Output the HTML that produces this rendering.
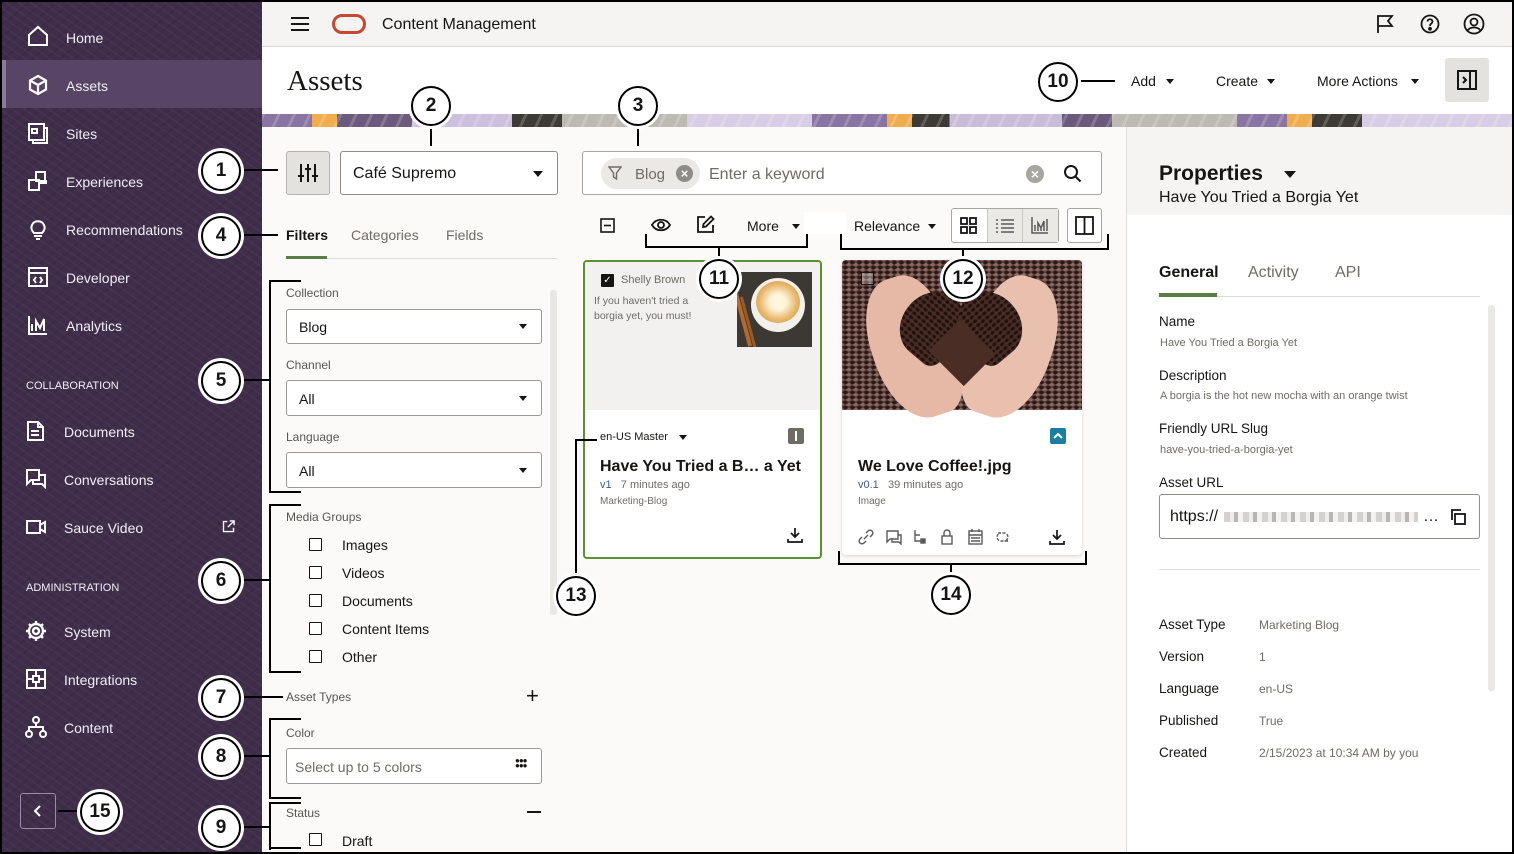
<!DOCTYPE html>
<html><head><meta charset="utf-8"><style>
*{box-sizing:border-box;margin:0;padding:0}
body{width:1514px;height:854px;position:relative;overflow:hidden;font-family:"Liberation Sans",sans-serif;background:#fbfaf8;color:#161513}
.a{position:absolute}
.t{position:absolute;white-space:nowrap;line-height:1}
.side{left:0;top:0;width:262px;height:854px;background:#3f2d4a;background-image:repeating-linear-gradient(35deg,rgba(255,255,255,.03) 0 2px,transparent 2px 7px),repeating-linear-gradient(-40deg,rgba(0,0,0,.06) 0 2px,transparent 2px 9px)}
.si{color:#f2eef4;font-size:14px}
.sec{color:#f2eef4;font-size:11px}
.ic{position:absolute}
.c{position:absolute;width:40px;height:40px;border:2px solid #000;border-radius:50%;background:#fff;box-shadow:0 0 0 3px #fff;font:bold 19px "Liberation Sans",sans-serif;display:flex;align-items:center;justify-content:center}
.l{position:absolute;background:#000}
.sel{position:absolute;background:#fff;border:1px solid #9a9894;border-radius:3px}
.car{position:absolute;width:0;height:0;border-left:4px solid transparent;border-right:4px solid transparent;border-top:5px solid #161513}
.cb{position:absolute;width:13px;height:13px;border:1.5px solid #161513;border-radius:1px;background:#fff}
.lab{font-size:12px;color:#58564f}
.val{font-size:11px;color:#6f6c66}
</style></head><body>
<div class="a" style="inset:0;border:2px solid #000;z-index:50;pointer-events:none"></div>

<!-- sidebar -->
<div class="a side"></div>
<div class="a" style="left:2px;top:60px;width:260px;height:48px;background:#584566"></div>
<div class="a" style="left:2px;top:60px;width:4px;height:48px;background:#8c7a9b"></div>
<svg class="ic" style="left:26px;top:24px" width="24" height="24" viewBox="0 0 24 24" fill="none" stroke="#fff" stroke-width="2"><path d="M3 11 L12 3 L21 11 V21 H3 Z"/></svg>
<div class="t si" style="left:66px;top:31px">Home</div>
<svg class="ic" style="left:26px;top:73px" width="24" height="24" viewBox="0 0 24 24" fill="none" stroke="#fff" stroke-width="2.2"><path d="M12 3 L20 7.5 V16.5 L12 21 L4 16.5 V7.5 Z M4 7.5 L12 12 L20 7.5 M12 12 V21"/></svg>
<div class="t si" style="left:66px;top:79px">Assets</div>
<svg class="ic" style="left:26px;top:121px" width="24" height="24" viewBox="0 0 24 24" fill="none" stroke="#fff" stroke-width="2"><rect x="3" y="3" width="15" height="16"/><path d="M18 7 H21 V22 H7 V19"/><rect x="6" y="8" width="5" height="4"/></svg>
<div class="t si" style="left:66px;top:127px">Sites</div>
<svg class="ic" style="left:26px;top:169px" width="24" height="24" viewBox="0 0 24 24" fill="none" stroke="#fff" stroke-width="2"><rect x="10" y="3" width="9" height="9"/><rect x="3" y="11" width="10" height="10"/><path d="M13 14 H20 V11"/></svg>
<div class="t si" style="left:66px;top:175px">Experiences</div>
<svg class="ic" style="left:26px;top:217px" width="24" height="24" viewBox="0 0 24 24" fill="none" stroke="#fff" stroke-width="2"><path d="M8 16 C5 13 5 10 6 8 C8 3 16 3 18 8 C19 10 19 13 16 16 Z M8 19 H16 M10 22 H14"/></svg>
<div class="t si" style="left:66px;top:223px">Recommendations</div>
<svg class="ic" style="left:26px;top:265px" width="24" height="24" viewBox="0 0 24 24" fill="none" stroke="#fff" stroke-width="2"><rect x="3" y="3" width="18" height="18"/><path d="M3 8 H21 M10 12 L8 15 L10 18 M14 12 L16 15 L14 18"/></svg>
<div class="t si" style="left:66px;top:271px">Developer</div>
<svg class="ic" style="left:26px;top:313px" width="24" height="24" viewBox="0 0 24 24" fill="none" stroke="#fff" stroke-width="2"><path d="M3 3 V21 H21 M6 18 V11 M10 18 V8 L14 15 L18 6 V18"/></svg>
<div class="t si" style="left:66px;top:319px">Analytics</div>
<div class="t sec" style="left:26px;top:381px">COLLABORATION</div>
<svg class="ic" style="left:24px;top:419px" width="24" height="24" viewBox="0 0 24 24" fill="none" stroke="#fff" stroke-width="2"><path d="M4 3 H14 L19 8 V21 H4 Z M14 3 V8 H19 M7 12 H15 M7 16 H15"/></svg>
<div class="t si" style="left:64px;top:425px">Documents</div>
<svg class="ic" style="left:24px;top:467px" width="24" height="24" viewBox="0 0 24 24" fill="none" stroke="#fff" stroke-width="2"><path d="M3 3 H15 V13 H7 L3 17 Z M15 8 H21 V20 L18 17 H9 V13"/></svg>
<div class="t si" style="left:64px;top:473px">Conversations</div>
<svg class="ic" style="left:24px;top:515px" width="24" height="24" viewBox="0 0 24 24" fill="none" stroke="#fff" stroke-width="2"><rect x="3" y="6" width="13" height="12"/><path d="M16 10 L21 7 V17 L16 14"/></svg>
<div class="t si" style="left:64px;top:521px">Sauce Video</div>
<svg class="ic" style="left:221px;top:519px" width="15" height="15" viewBox="0 0 24 24" fill="none" stroke="#fff" stroke-width="2.2"><path d="M10 4 H4 V20 H20 V14 M14 3 H21 V10 M21 3 L11 13"/></svg>
<div class="t sec" style="left:26px;top:583px">ADMINISTRATION</div>
<svg class="ic" style="left:24px;top:619px" width="24" height="24" viewBox="0 0 24 24" fill="none" stroke="#fff" stroke-width="2.4"><circle cx="12" cy="12" r="3"/><path d="M12 2 V5 M12 19 V22 M2 12 H5 M19 12 H22 M5 5 L7 7 M17 17 L19 19 M5 19 L7 17 M17 7 L19 5"/><circle cx="12" cy="12" r="7"/></svg>
<div class="t si" style="left:64px;top:625px">System</div>
<svg class="ic" style="left:24px;top:667px" width="24" height="24" viewBox="0 0 24 24" fill="none" stroke="#fff" stroke-width="2"><rect x="3" y="3" width="18" height="18"/><path d="M12 3 V9 M3 12 H9 M12 15 V21 M15 12 H21 M9 9 H15 V15 H9 Z"/></svg>
<div class="t si" style="left:64px;top:673px">Integrations</div>
<svg class="ic" style="left:24px;top:715px" width="24" height="24" viewBox="0 0 24 24" fill="none" stroke="#fff" stroke-width="2"><circle cx="12" cy="5" r="3"/><circle cx="5" cy="19" r="3"/><circle cx="19" cy="19" r="3"/><path d="M12 8 V12 M5 16 V12 H19 V16"/></svg>
<div class="t si" style="left:64px;top:721px">Content</div>
<div class="a" style="left:20px;top:793px;width:36px;height:36px;border:1px solid #9c8aab;border-radius:3px"></div>
<svg class="ic" style="left:30px;top:803px" width="16" height="16" viewBox="0 0 16 16" fill="none" stroke="#fff" stroke-width="2"><path d="M10 3 L5 8 L10 13"/></svg>

<!-- top bar -->
<div class="a" style="left:262px;top:0;width:1252px;height:47px;background:#f5f4f2;border-bottom:1px solid #dcdad6"></div>
<svg class="ic" style="left:290px;top:15px" width="20" height="18" viewBox="0 0 20 18" stroke="#161513" stroke-width="2"><path d="M1 3 H19 M1 9 H19 M1 15 H19"/></svg>
<div class="a" style="left:332px;top:14px;width:34px;height:20px;border:3.5px solid #c74634;border-radius:10px"></div>
<div class="t" style="left:382px;top:17px;font-size:16px">Content Management</div>
<svg class="ic" style="left:1375px;top:14px" width="20" height="20" viewBox="0 0 20 20" fill="none" stroke="#161513" stroke-width="1.8"><path d="M3 19 V2 H17 L13 7 L17 12 H3"/></svg>
<svg class="ic" style="left:1420px;top:14px" width="20" height="20" viewBox="0 0 20 20" fill="none" stroke="#161513" stroke-width="1.8"><circle cx="10" cy="10" r="8.5"/><path d="M7.5 7.5 C7.5 4.5 12.5 4.5 12.5 7.5 C12.5 9.5 10 9.5 10 12"/><circle cx="10" cy="14.8" r="1" fill="#161513"/></svg>
<svg class="ic" style="left:1463px;top:13px" width="22" height="22" viewBox="0 0 22 22" fill="none" stroke="#161513" stroke-width="1.8"><circle cx="11" cy="11" r="9.5"/><circle cx="11" cy="9" r="3.5"/><path d="M4.5 17.5 C7 13.5 15 13.5 17.5 17.5"/></svg>

<!-- header -->
<div class="a" style="left:262px;top:47px;width:1252px;height:67px;background:#fff"></div>
<div class="t" style="left:287px;top:67px;font-family:'Liberation Serif',serif;font-size:29px">Assets</div>
<div class="t" style="left:1131px;top:74px;font-size:14px">Add</div><div class="car" style="left:1166px;top:79px"></div>
<div class="t" style="left:1216px;top:74px;font-size:14px">Create</div><div class="car" style="left:1267px;top:79px"></div>
<div class="t" style="left:1317px;top:74px;font-size:14px">More Actions</div><div class="car" style="left:1411px;top:79px"></div>
<div class="a" style="left:1445px;top:58px;width:44px;height:44px;background:#e4e2df;border-radius:3px"></div>
<svg class="ic" style="left:1456px;top:69px" width="22" height="22" viewBox="0 0 22 22" fill="none" stroke="#161513" stroke-width="2"><rect x="2" y="2" width="18" height="18"/><path d="M14 2 V20 M7 8 L10 11 L7 14"/></svg>

<!-- banner -->
<div class="a" style="left:262px;top:114px;width:1250px;height:13px;background:linear-gradient(90deg,#8a74a3 0 4%,#f0ad4e 4% 6%,#6b5a7e 6% 12%,#cdbfdf 12% 20%,#3e3a36 20% 24%,#bdbab4 24% 34%,#d8cde6 34% 44%,#8a74a3 44% 50%,#f0ad4e 50% 52%,#3e3a36 52% 55%,#c9bcd9 55% 64%,#6b5a7e 64% 68%,#bdbab4 68% 78%,#8a74a3 78% 82%,#f0ad4e 82% 84%,#3e3a36 84% 88%,#d8cde6 88% 100%)"></div>
<div class="a" style="left:262px;top:114px;width:1250px;height:13px;background:repeating-linear-gradient(115deg,rgba(255,255,255,.18) 0 3px,transparent 3px 14px)"></div>

<!-- filter panel -->
<div class="a" style="left:286px;top:151px;width:44px;height:44px;background:#e4e2df;border:1px solid #b5b2ad;border-radius:3px"></div>
<svg class="ic" style="left:297px;top:162px" width="22" height="22" viewBox="0 0 22 22" fill="none" stroke="#161513" stroke-width="2"><path d="M4 2 V20 M11 2 V20 M18 2 V20 M1 14 H7 M8 7 H14 M15 14 H21"/></svg>
<div class="sel" style="left:340px;top:151px;width:218px;height:44px;border-color:#8f8d88"></div>
<div class="t" style="left:353px;top:166px;font-size:16px">Café Supremo</div><div class="car" style="left:533px;top:171px;border-left-width:5px;border-right-width:5px;border-top-width:6px"></div>
<div class="t" style="left:286px;top:228px;font-size:14px;font-weight:bold">Filters</div>
<div class="t" style="left:351px;top:228px;font-size:14px;color:#6f6c66">Categories</div>
<div class="t" style="left:446px;top:228px;font-size:14px;color:#6f6c66">Fields</div>
<div class="a" style="left:286px;top:258px;width:271px;height:1px;background:#dcdad6"></div>
<div class="a" style="left:286px;top:256px;width:41px;height:3px;background:#5a7d47"></div>
<div class="a" style="left:550px;top:290px;width:7px;height:325px;background:#e8e7e4;border-radius:3px"></div>

<div class="t lab" style="left:286px;top:287px">Collection</div>
<div class="sel" style="left:286px;top:309px;width:256px;height:35px"></div><div class="t" style="left:299px;top:320px;font-size:14px">Blog</div><div class="car" style="left:519px;top:324px"></div>
<div class="t lab" style="left:286px;top:359px">Channel</div>
<div class="sel" style="left:286px;top:380px;width:256px;height:36px"></div><div class="t" style="left:299px;top:392px;font-size:14px">All</div><div class="car" style="left:519px;top:396px"></div>
<div class="t lab" style="left:286px;top:431px">Language</div>
<div class="sel" style="left:286px;top:452px;width:256px;height:36px"></div><div class="t" style="left:299px;top:464px;font-size:14px">All</div><div class="car" style="left:519px;top:468px"></div>
<div class="t lab" style="left:286px;top:511px">Media Groups</div>
<div class="cb" style="left:309px;top:538px"></div><div class="t" style="left:342px;top:538px;font-size:14px">Images</div>
<div class="cb" style="left:309px;top:566px"></div><div class="t" style="left:342px;top:566px;font-size:14px">Videos</div>
<div class="cb" style="left:309px;top:594px"></div><div class="t" style="left:342px;top:594px;font-size:14px">Documents</div>
<div class="cb" style="left:309px;top:622px"></div><div class="t" style="left:342px;top:622px;font-size:14px">Content Items</div>
<div class="cb" style="left:309px;top:650px"></div><div class="t" style="left:342px;top:650px;font-size:14px">Other</div>
<div class="t lab" style="left:286px;top:691px">Asset Types</div>
<div class="t" style="left:526px;top:685px;font-size:22px">+</div>
<div class="t lab" style="left:286px;top:727px">Color</div>
<div class="sel" style="left:286px;top:748px;width:256px;height:36px"></div><div class="t" style="left:295px;top:760px;font-size:14px;color:#6f6c66">Select up to 5 colors</div>
<div class="t" style="left:515px;top:758px;font-size:8px;letter-spacing:-1px;line-height:5px">●●●<br>●●●</div>
<div class="t lab" style="left:286px;top:807px">Status</div>
<div class="a" style="left:527px;top:811px;width:14px;height:2px;background:#161513"></div>
<div class="cb" style="left:309px;top:833px"></div><div class="t" style="left:342px;top:834px;font-size:14px">Draft</div>

<!-- search -->
<div class="sel" style="left:582px;top:151px;width:520px;height:44px;border-color:#a8a6a1"></div>
<div class="a" style="left:601px;top:158px;width:99px;height:31px;background:#ebe9e6;border-radius:16px"></div>
<svg class="ic" style="left:608px;top:166px" width="14" height="14" viewBox="0 0 14 14" fill="none" stroke="#6f6c66" stroke-width="1.4"><path d="M1 1 H13 L8.5 7 V13 L5.5 11 V7 Z"/></svg>
<div class="t" style="left:635px;top:167px;font-size:15px;color:#6f6c66">Blog</div>
<div class="a" style="left:676px;top:165px;width:17px;height:17px;border-radius:50%;background:#8f8d88;color:#fff;font-size:13px;text-align:center;line-height:17px;font-weight:bold">×</div>
<div class="t" style="left:709px;top:167px;font-size:16px;color:#6f6c66">Enter a keyword</div>
<div class="a" style="left:1026px;top:165px;width:18px;height:18px;border-radius:50%;background:#a8a6a1;color:#fff;font-size:14px;text-align:center;line-height:18px;font-weight:bold">×</div>
<svg class="ic" style="left:1063px;top:164px" width="19" height="19" viewBox="0 0 19 19" fill="none" stroke="#161513" stroke-width="2"><circle cx="8" cy="8" r="6"/><path d="M12.5 12.5 L17.5 17.5"/></svg>

<!-- toolbar -->
<svg class="ic" style="left:600px;top:218px" width="15" height="15" viewBox="0 0 15 15" fill="none" stroke="#161513" stroke-width="1.6"><rect x="1" y="1" width="13" height="13"/><path d="M4 7.5 H11"/></svg>
<svg class="ic" style="left:651px;top:216px" width="20" height="18" viewBox="0 0 20 18" fill="none" stroke="#161513" stroke-width="1.8"><path d="M1 9 C5 2 15 2 19 9 C15 16 5 16 1 9 Z"/><circle cx="10" cy="9" r="3"/></svg>
<svg class="ic" style="left:696px;top:215px" width="19" height="19" viewBox="0 0 19 19" fill="none" stroke="#161513" stroke-width="1.8"><path d="M9 2 H2 V17 H17 V10 M15 1.5 L17.5 4 L10 11.5 L7 12 L7.5 9 Z"/></svg>
<div class="t" style="left:747px;top:219px;font-size:14px">More</div><div class="car" style="left:792px;top:224px"></div>
<div class="a" style="left:804px;top:212px;width:42px;height:22px;background:#fff"></div>
<div class="t" style="left:854px;top:219px;font-size:14px">Relevance</div><div class="car" style="left:928px;top:224px"></div>
<div class="a" style="left:951px;top:208px;width:108px;height:35px;border:1px solid #a8a6a1;border-radius:3px;background:#fff"></div>
<div class="a" style="left:987px;top:209px;width:71px;height:33px;background:#ebe9e6;border-left:1px solid #c8c6c1"></div>
<div class="a" style="left:1022px;top:209px;width:1px;height:33px;background:#c8c6c1"></div>
<svg class="ic" style="left:960px;top:217px" width="17" height="17" viewBox="0 0 17 17" fill="none" stroke="#161513" stroke-width="1.8"><rect x="1" y="1" width="6" height="6"/><rect x="10" y="1" width="6" height="6"/><rect x="1" y="10" width="6" height="6"/><rect x="10" y="10" width="6" height="6"/></svg>
<svg class="ic" style="left:996px;top:218px" width="18" height="15" viewBox="0 0 18 15" stroke="#5a5a5a" stroke-width="1.6"><path d="M0 2 H2 M5 2 H18 M0 6 H2 M5 6 H18 M0 10 H2 M5 10 H18 M0 14 H2 M5 14 H18"/></svg>
<svg class="ic" style="left:1031px;top:216px" width="18" height="18" viewBox="0 0 18 18" fill="none" stroke="#5a5a5a" stroke-width="1.5"><path d="M1 1 V17 H17 M4 15 V9 M7 15 V7 L10 12 L13 5 M10 15 V12 M13 15 V5 M16 15 V3"/></svg>
<div class="a" style="left:1067px;top:208px;width:35px;height:35px;border:1px solid #a8a6a1;border-radius:3px;background:#fff"></div>
<svg class="ic" style="left:1075px;top:216px" width="19" height="19" viewBox="0 0 19 19" fill="none" stroke="#161513" stroke-width="1.8"><rect x="1" y="1" width="17" height="17"/><path d="M9.5 1 V18"/></svg>

<!-- card 1 -->
<div class="a" style="left:583px;top:260px;width:239px;height:299px;border:2px solid #5b9034;border-radius:4px;background:#fff;overflow:hidden">
 <div class="a" style="left:0;top:0;width:235px;height:148px;background:#f2f1ef"></div>
</div>
<div class="a" style="left:601px;top:274px;width:13px;height:13px;background:#161513;border-radius:1px;color:#fff;font-size:10px;line-height:13px;text-align:center">✓</div>
<div class="t" style="left:621px;top:275px;font-size:11px;color:#6f6c66">Shelly Brown</div>
<div class="t" style="left:594px;top:294px;font-size:10.5px;color:#6f6c66;line-height:15px">If you haven't tried a<br>borgia yet, you must!</div>
<div class="a" style="left:737px;top:272px;width:75px;height:75px;background:#3c3834;overflow:hidden">
 <div class="a" style="left:14px;top:6px;width:54px;height:54px;border-radius:50%;background:#f2f0ea"></div>
 <div class="a" style="left:19px;top:9px;width:44px;height:42px;border-radius:50%;background:radial-gradient(#fff6dc 0 25%,#e8b76a 60%,#c98a3c)"></div>
 <div class="a" style="left:4px;top:20px;width:4px;height:55px;background:#b56a2c;transform:rotate(-15deg)"></div>
 <div class="a" style="left:10px;top:24px;width:3px;height:55px;background:#9a5a24;transform:rotate(-15deg)"></div>
</div>
<div class="t" style="left:600px;top:432px;font-size:11px">en-US Master</div><div class="car" style="left:679px;top:435px"></div>
<div class="a" style="left:788px;top:428px;width:16px;height:16px;background:#6f6c66;border-radius:2px"></div><div class="a" style="left:795px;top:431px;width:2px;height:10px;background:#fff"></div>
<div class="t" style="left:600px;top:459px;font-size:16px;font-weight:bold">Have You Tried a B… a Yet</div>
<div class="t" style="left:600px;top:480px;font-size:11px;color:#6f6c66"><span style="color:#3a5c8f">v1</span>&nbsp;&nbsp; 7 minutes ago</div>
<div class="t" style="left:600px;top:497px;font-size:10px;color:#6f6c66">Marketing-Blog</div>
<svg class="ic" style="left:787px;top:527px" width="16" height="16" viewBox="0 0 16 16" fill="none" stroke="#161513" stroke-width="1.7"><path d="M8 1 V10 M4 6 L8 10 L12 6 M1 12 V15 H15 V12"/></svg>

<!-- card 2 -->
<div class="a" style="left:842px;top:260px;width:240px;height:295px;background:#fff;border-radius:4px;box-shadow:0 1px 3px rgba(0,0,0,.15);overflow:hidden">
 <div class="a" style="left:0;top:0;width:240px;height:150px;background:radial-gradient(ellipse 3px 2px at 50% 50%,#2a1812 0 60%,transparent 100%) 0 0/7px 5px,radial-gradient(ellipse 3px 2px at 50% 50%,#8a6a66 0 60%,transparent 100%) 3px 2px/7px 5px,#5a3e3a"></div>
 <div class="a" style="left:30px;top:15px;width:80px;height:145px;border-radius:45% 40% 30% 50%;background:#e6b8a6;transform:rotate(-18deg)"></div>
 <div class="a" style="left:130px;top:15px;width:80px;height:145px;border-radius:40% 45% 50% 30%;background:#e9bfae;transform:rotate(18deg)"></div>
 <div class="a" style="left:60px;top:30px;width:60px;height:70px;border-radius:50% 50% 20% 50%;background:radial-gradient(ellipse 3px 2px,#1f120d 0 60%,transparent 100%) 0 0/6px 5px,#4a2d25;transform:rotate(40deg)"></div>
 <div class="a" style="left:118px;top:30px;width:60px;height:70px;border-radius:50% 50% 50% 20%;background:radial-gradient(ellipse 3px 2px,#1f120d 0 60%,transparent 100%) 0 0/6px 5px,#4a2d25;transform:rotate(-40deg)"></div>
 <div class="a" style="left:95px;top:70px;width:50px;height:45px;background:#4a2d25;transform:rotate(45deg)"></div>
</div>
<div class="a" style="left:861px;top:272px;width:13px;height:13px;border:1.5px solid #161513;background:rgba(255,255,255,.3)"></div>
<div class="a" style="left:1050px;top:428px;width:16px;height:16px;background:#1a7ea3;border-radius:2px"></div>
<svg class="ic" style="left:1053px;top:431px" width="10" height="10" viewBox="0 0 10 10" fill="none" stroke="#fff" stroke-width="2"><path d="M1 7 L5 3 L9 7"/></svg>
<div class="t" style="left:858px;top:459px;font-size:16px;font-weight:bold">We Love Coffee!.jpg</div>
<div class="t" style="left:858px;top:480px;font-size:11px;color:#6f6c66"><span style="color:#3a5c8f">v0.1</span>&nbsp;&nbsp; 39 minutes ago</div>
<div class="t" style="left:858px;top:497px;font-size:10px;color:#6f6c66">Image</div>
<svg class="ic" style="left:858px;top:529px" width="215" height="16" viewBox="0 0 215 16" fill="none" stroke="#5a5a5a" stroke-width="1.4">
<path d="M6 10 L10 6 M4 8 L2 10 A2.5 2.5 0 0 0 6 14 L8 12 M8 4 L10 2 A2.5 2.5 0 0 1 14 6 L12 8"/>
<path d="M29 2 H40 V10 H32 L29 13 Z M40 6 H43 V15 L41 13 H34 V10"/>
<path d="M57 1 V6 H62 M57 6 V12 H63"/><rect x="63" y="10" width="4" height="4" fill="#5a5a5a"/>
<rect x="84" y="7" width="10" height="8"/><path d="M86 7 V4 A3 3 0 0 1 92 4 V7"/>
<rect x="111" y="2" width="13" height="13"/><path d="M111 6 H124 M114 0 V3 M121 0 V3 M113 9 H122 M113 12 H122"/>
<path d="M140 4 H146 A4 4 0 0 1 146 12 M150 12 H143 A4 4 0 0 1 143 4" stroke-dasharray="3 1.5"/>
<path d="M199 1 V10 M195 6 L199 10 L203 6 M192 12 V15 H206 V12" stroke="#161513" stroke-width="1.7"/>
</svg>

<!-- right panel -->
<div class="a" style="left:1126px;top:127px;width:386px;height:727px;background:#fff;border-left:1px solid #e0deda"></div>
<div class="a" style="left:1127px;top:127px;width:385px;height:88px;background:#f5f4f2"></div>
<div class="t" style="left:1159px;top:163px;font-size:21px;font-weight:bold">Properties</div>
<div class="car" style="left:1284px;top:171px;border-left-width:6px;border-right-width:6px;border-top-width:7px"></div>
<div class="t" style="left:1159px;top:190px;font-size:16px">Have You Tried a Borgia Yet</div>
<div class="t" style="left:1159px;top:265px;font-size:16px;font-weight:bold">General</div>
<div class="t" style="left:1248px;top:265px;font-size:16px;color:#6f6c66">Activity</div>
<div class="t" style="left:1335px;top:265px;font-size:16px;color:#6f6c66">API</div>
<div class="a" style="left:1159px;top:296px;width:321px;height:1px;background:#dcdad6"></div>
<div class="a" style="left:1159px;top:293px;width:58px;height:4px;background:#5a7d47"></div>
<div class="a" style="left:1488px;top:305px;width:7px;height:386px;background:#ebe9e6;border-radius:3px"></div>
<div class="t" style="left:1159px;top:315px;font-size:13.5px">Name</div>
<div class="t val" style="left:1160px;top:338px">Have You Tried a Borgia Yet</div>
<div class="t" style="left:1159px;top:369px;font-size:13.5px">Description</div>
<div class="t val" style="left:1160px;top:391px">A borgia is the hot new mocha with an orange twist</div>
<div class="t" style="left:1159px;top:422px;font-size:13.5px">Friendly URL Slug</div>
<div class="t val" style="left:1160px;top:445px">have-you-tried-a-borgia-yet</div>
<div class="t" style="left:1159px;top:476px;font-size:13.5px">Asset URL</div>
<div class="sel" style="left:1159px;top:494px;width:321px;height:45px;border-color:#8f8d88"></div>
<div class="t" style="left:1170px;top:509px;font-size:16px">https://</div>
<div class="a" style="left:1224px;top:512px;width:194px;height:10px;background:repeating-linear-gradient(90deg,#d4d2ce 0 6px,#eeedeb 6px 10px,#b8b6b2 10px 14px,#f3f2f0 14px 19px)"></div>
<div class="t" style="left:1423px;top:509px;font-size:16px">…</div>
<svg class="ic" style="left:1449px;top:508px" width="18" height="18" viewBox="0 0 18 18" fill="none" stroke="#161513" stroke-width="1.8"><path d="M3 12 V2 H12"/><rect x="6" y="6" width="10" height="10"/></svg>
<div class="a" style="left:1159px;top:569px;width:321px;height:1px;background:#e0deda"></div>
<div class="t" style="left:1159px;top:618px;font-size:13.5px">Asset Type</div><div class="t" style="left:1259px;top:619px;font-size:12px;color:#6f6c66">Marketing Blog</div>
<div class="t" style="left:1159px;top:650px;font-size:13.5px">Version</div><div class="t" style="left:1259px;top:651px;font-size:12px;color:#6f6c66">1</div>
<div class="t" style="left:1159px;top:682px;font-size:13.5px">Language</div><div class="t" style="left:1259px;top:683px;font-size:12px;color:#6f6c66">en-US</div>
<div class="t" style="left:1159px;top:714px;font-size:13.5px">Published</div><div class="t" style="left:1259px;top:715px;font-size:12px;color:#6f6c66">True</div>
<div class="t" style="left:1159px;top:746px;font-size:13.5px">Created</div><div class="t" style="left:1259px;top:747px;font-size:12px;color:#6f6c66">2/15/2023 at 10:34 AM by you</div>

<!-- callout lines -->
<div class="l" style="left:240px;top:169px;width:38px;height:2px"></div>
<div class="l" style="left:430px;top:124px;width:2px;height:22px"></div>
<div class="l" style="left:637px;top:124px;width:2px;height:22px"></div>
<div class="l" style="left:240px;top:234px;width:38px;height:2px"></div>
<div class="l" style="left:269px;top:280px;width:2px;height:213px"></div><div class="l" style="left:269px;top:280px;width:32px;height:2px"></div><div class="l" style="left:269px;top:491px;width:32px;height:2px"></div><div class="l" style="left:240px;top:379px;width:30px;height:2px"></div>
<div class="l" style="left:269px;top:504px;width:2px;height:169px"></div><div class="l" style="left:269px;top:504px;width:32px;height:2px"></div><div class="l" style="left:269px;top:671px;width:32px;height:2px"></div><div class="l" style="left:240px;top:579px;width:30px;height:2px"></div>
<div class="l" style="left:240px;top:696px;width:43px;height:2px"></div>
<div class="l" style="left:269px;top:718px;width:2px;height:81px"></div><div class="l" style="left:269px;top:718px;width:32px;height:2px"></div><div class="l" style="left:269px;top:797px;width:32px;height:2px"></div><div class="l" style="left:240px;top:755px;width:30px;height:2px"></div>
<div class="l" style="left:269px;top:802px;width:2px;height:48px"></div><div class="l" style="left:269px;top:802px;width:32px;height:2px"></div><div class="l" style="left:269px;top:847px;width:32px;height:2px"></div><div class="l" style="left:240px;top:826px;width:30px;height:2px"></div>
<div class="l" style="left:645px;top:246px;width:163px;height:2px"></div><div class="l" style="left:645px;top:234px;width:2px;height:14px"></div><div class="l" style="left:806px;top:234px;width:2px;height:14px"></div><div class="l" style="left:718px;top:246px;width:2px;height:14px"></div>
<div class="l" style="left:840px;top:248px;width:269px;height:2px"></div><div class="l" style="left:840px;top:234px;width:2px;height:16px"></div><div class="l" style="left:1107px;top:234px;width:2px;height:16px"></div><div class="l" style="left:962px;top:248px;width:2px;height:12px"></div>
<div class="l" style="left:575px;top:439px;width:2px;height:137px"></div><div class="l" style="left:575px;top:439px;width:22px;height:2px"></div>
<div class="l" style="left:838px;top:563px;width:249px;height:2px"></div><div class="l" style="left:838px;top:551px;width:2px;height:14px"></div><div class="l" style="left:1085px;top:551px;width:2px;height:14px"></div><div class="l" style="left:950px;top:563px;width:2px;height:12px"></div>
<div class="l" style="left:1077px;top:80px;width:38px;height:2px"></div>
<div class="l" style="left:58px;top:810px;width:24px;height:2px"></div>

<div class="c" style="left:201px;top:151px">1</div>
<div class="c" style="left:411px;top:86px">2</div>
<div class="c" style="left:618px;top:86px">3</div>
<div class="c" style="left:201px;top:216px">4</div>
<div class="c" style="left:201px;top:361px">5</div>
<div class="c" style="left:201px;top:561px">6</div>
<div class="c" style="left:201px;top:678px">7</div>
<div class="c" style="left:201px;top:737px">8</div>
<div class="c" style="left:201px;top:808px">9</div>
<div class="c" style="left:1038px;top:62px">10</div>
<div class="c" style="left:699px;top:259px">11</div>
<div class="c" style="left:943px;top:259px">12</div>
<div class="c" style="left:556px;top:576px">13</div>
<div class="c" style="left:931px;top:575px">14</div>
<div class="c" style="left:80px;top:792px">15</div>
</body></html>
